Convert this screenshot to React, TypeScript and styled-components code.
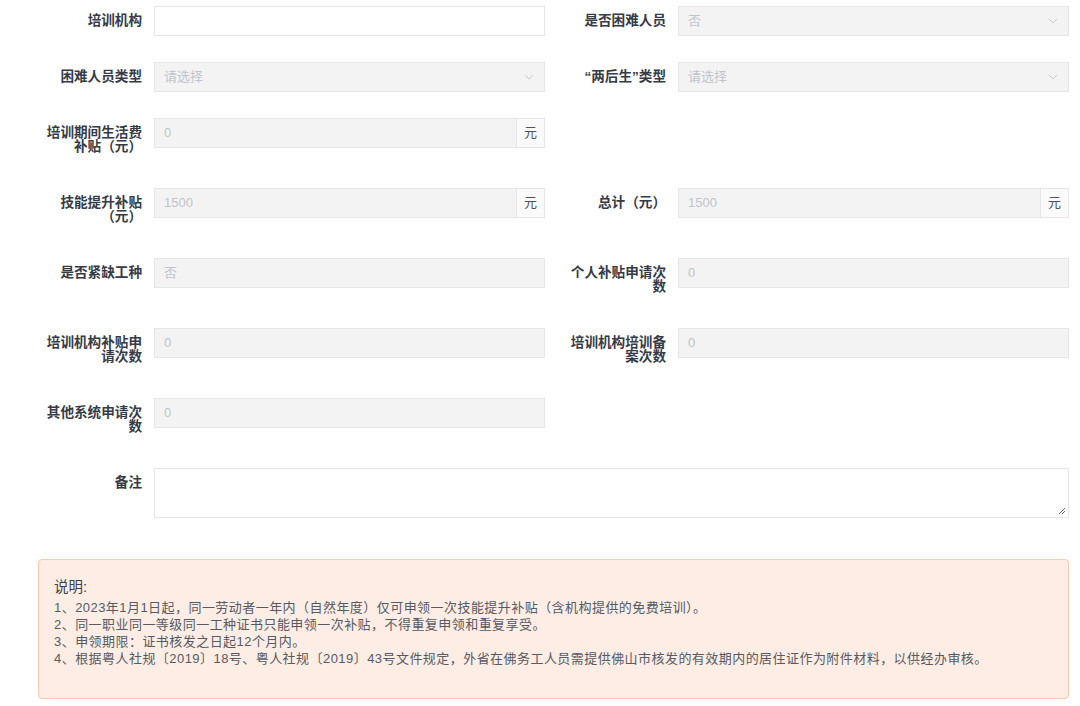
import { FC } from 'react';
import styled, { createGlobalStyle } from 'styled-components';

const GlobalStyle = createGlobalStyle`
  html, body {
    margin: 0;
    padding: 0;
    background: #fff;
    font-family: "Liberation Sans", "Noto Sans CJK SC", sans-serif;
  }
`;

const Page = styled.div`
  width: 1080px;
  padding: 6px 11px 0 38px;
  box-sizing: border-box;
`;

const FormGrid = styled.div`
  display: grid;
  grid-template-columns: 503px 503px;
  column-gap: 21px;
  row-gap: 26px;
  padding-left: 4px;
`;

const Item = styled.div<{ $wide?: boolean }>`
  display: flex;
  align-items: flex-start;
  grid-column: ${({ $wide }) => ($wide ? '1 / -1' : 'auto')};
`;

const Label = styled.label`
  flex: 0 0 112px;
  box-sizing: border-box;
  padding: 8px 12px 8px 0;
  text-align: right;
  font-size: 13.6px;
  line-height: 14px;
  font-weight: bold;
  color: #363b47;
  word-break: break-all;
`;

const Field = styled.div<{ $disabled?: boolean; $height?: number }>`
  flex: 1;
  display: flex;
  height: ${({ $height }) => $height ?? 30}px;
  box-sizing: border-box;
  border: 1px solid #e6e6e6;
  background: ${({ $disabled }) => ($disabled ? '#f3f3f3' : '#fff')};
  position: relative;
`;

const Value = styled.span`
  flex: 1;
  padding: 0 9px;
  font-size: 13px;
  line-height: 28px;
  color: #c0c4cc;
`;

const Suffix = styled.span`
  flex: 0 0 27px;
  border-left: 1px solid #e6e6e6;
  background: #fafafa;
  text-align: center;
  font-size: 13px;
  line-height: 28px;
  color: #4a5060;
`;

const Arrow = styled.span`
  display: flex;
  align-items: center;
  padding-right: 10px;
`;

const Grip = styled.svg`
  position: absolute;
  right: 2px;
  bottom: 2px;
`;

const Notice = styled.div`
  margin-top: 41px;
  box-sizing: border-box;
  width: 1031px;
  height: 140px;
  border: 1px solid #fdc9ac;
  border-radius: 4px;
  background: #feede5;
  padding: 17px 15px 0;
  color: #555a63;
`;

const NoticeTitle = styled.div`
  font-size: 14.5px;
  line-height: 20px;
  color: #3a3f4b;
  margin-bottom: 2px;
`;

const NoticeLine = styled.div`
  font-size: 13px;
  line-height: 17px;
  letter-spacing: 0.45px;
`;

const Chevron: FC = () => (
  <Arrow>
    <svg width="10" height="6" viewBox="0 0 10 6">
      <path d="M1 1l4 4 4-4" fill="none" stroke="#c8cbd0" strokeWidth="1" />
    </svg>
  </Arrow>
);

type Row = {
  label: string;
  value?: string;
  kind?: 'input' | 'select' | 'disabled';
  suffix?: boolean;
};

const rows: (Row | null)[] = [
  { label: '培训机构', kind: 'input' },
  { label: '是否困难人员', value: '否', kind: 'select' },
  { label: '困难人员类型', value: '请选择', kind: 'select' },
  { label: '“两后生”类型', value: '请选择', kind: 'select' },
  { label: '培训期间生活费补贴（元）', value: '0', kind: 'disabled', suffix: true },
  null,
  { label: '技能提升补贴（元）', value: '1500', kind: 'disabled', suffix: true },
  { label: '总计（元）', value: '1500', kind: 'disabled', suffix: true },
  { label: '是否紧缺工种', value: '否', kind: 'disabled' },
  { label: '个人补贴申请次数', value: '0', kind: 'disabled' },
  { label: '培训机构补贴申请次数', value: '0', kind: 'disabled' },
  { label: '培训机构培训备案次数', value: '0', kind: 'disabled' },
  { label: '其他系统申请次数', value: '0', kind: 'disabled' },
  null,
];

const notes = [
  '1、2023年1月1日起，同一劳动者一年内（自然年度）仅可申领一次技能提升补贴（含机构提供的免费培训）。',
  '2、同一职业同一等级同一工种证书只能申领一次补贴，不得重复申领和重复享受。',
  '3、申领期限：证书核发之日起12个月内。',
  '4、根据粤人社规〔2019〕18号、粤人社规〔2019〕43号文件规定，外省在佛务工人员需提供佛山市核发的有效期内的居住证作为附件材料，以供经办审核。',
];

const App: FC = () => (
  <>
    <GlobalStyle />
    <Page>
      <FormGrid>
        {rows.map((row, i) =>
          row ? (
            <Item key={row.label}>
              <Label>{row.label}</Label>
              <Field $disabled={row.kind !== 'input'}>
                <Value>{row.value}</Value>
                {row.kind === 'select' && <Chevron />}
                {row.suffix && <Suffix>元</Suffix>}
              </Field>
            </Item>
          ) : (
            <div key={`empty-${i}`} />
          ),
        )}
        <Item $wide>
          <Label>备注</Label>
          <Field $height={50}>
            <Grip width="8" height="8" viewBox="0 0 8 8">
              <path d="M7 1L1 7M7 4L4 7" stroke="#666" strokeWidth="1" />
            </Grip>
          </Field>
        </Item>
      </FormGrid>
      <Notice>
        <NoticeTitle>说明:</NoticeTitle>
        {notes.map((n) => (
          <NoticeLine key={n}>{n}</NoticeLine>
        ))}
      </Notice>
    </Page>
  </>
);

export default App;
